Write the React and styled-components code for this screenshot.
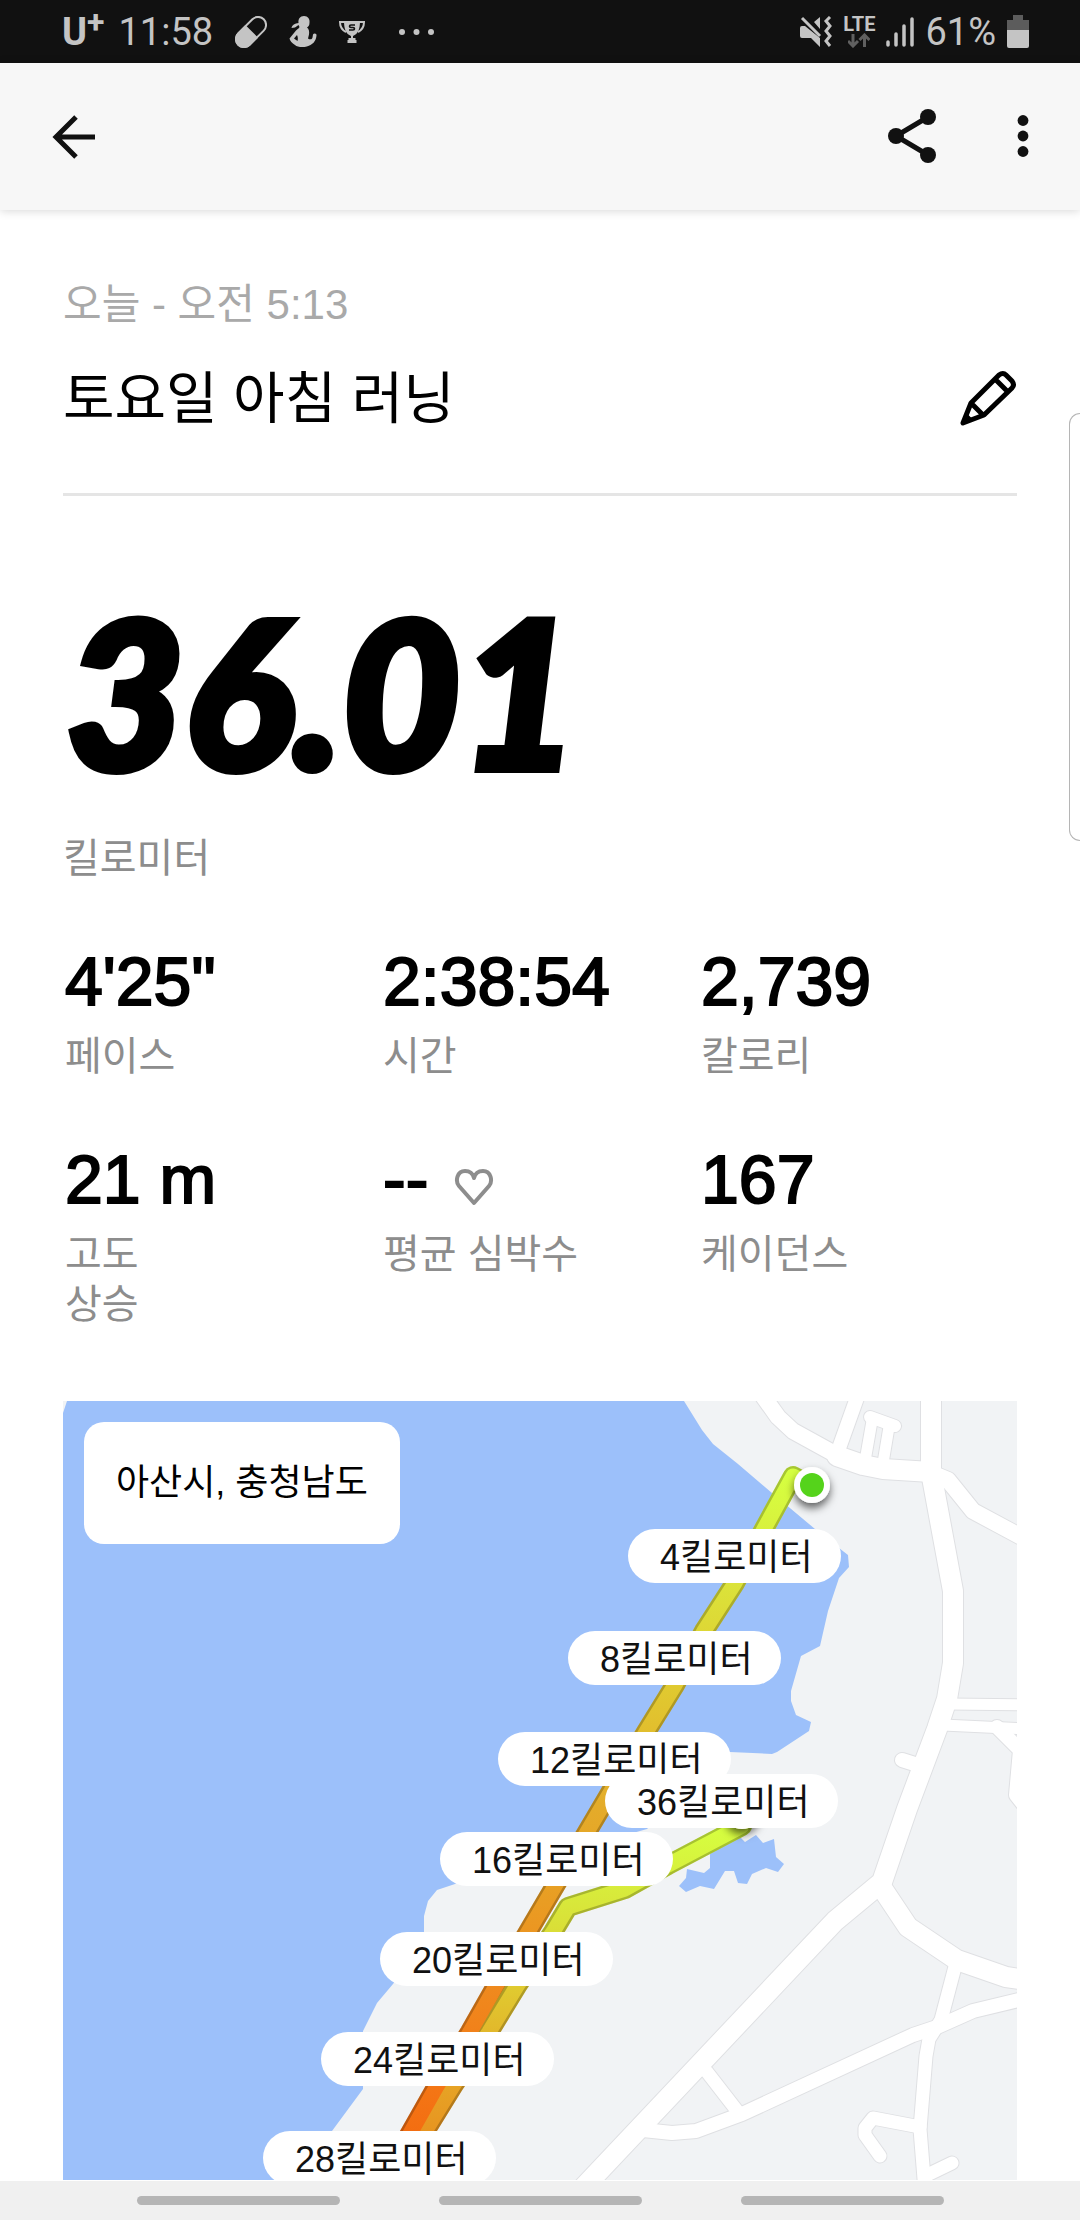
import React from "react";
import styled, { createGlobalStyle } from "styled-components";

const GlobalStyle = createGlobalStyle`
  * {
    box-sizing: border-box;
  }
  body {
    margin: 0;
    background: #fff;
    color: #000;
    font-family: "Liberation Sans", "Noto Sans CJK KR", sans-serif;
  }
`;

const Screen = styled.div`
  position: relative;
  display: flex;
  flex-direction: column;
  height: 100vh;
  overflow: hidden;
`;

const StatusBar = styled.div`
  display: flex;
  flex: none;
  align-items: center;
  justify-content: space-between;
  height: 63px;
  padding: 0 51px 0 62px;
  background: #111;
  color: #c4c4c4;
  font-family: Roboto, sans-serif;
  font-size: 38px;
  line-height: 48px;
`;

const StatusGroup = styled.div`
  display: flex;
  align-items: center;
  gap: ${(props) => props.$gap}px;
  svg {
    display: block;
  }
`;

const Overflow = styled.span`
  padding-left: 12px;
`;

const Carrier = styled.span`
  display: flex;
  font-weight: bold;
  line-height: 44px;
  sup {
    font-size: 32px;
    line-height: 24px;
    vertical-align: top;
  }
`;

const Network = styled.span`
  display: flex;
  flex-direction: column;
  align-items: center;
  font-size: 20px;
  font-weight: bold;
  line-height: 18px;
`;

const TopBar = styled.header`
  display: flex;
  flex: none;
  align-items: center;
  justify-content: space-between;
  height: 147px;
  padding: 0 22px 2px 43px;
  background: #f7f7f7;
  box-shadow: 0 1px 9px rgba(0, 0, 0, 0.16);
  z-index: 1;
`;

const Actions = styled.div`
  display: flex;
  align-items: center;
  gap: 52px;
`;

const IconButton = styled.button`
  display: flex;
  align-items: center;
  justify-content: center;
  padding: 0;
  border: 0;
  background: none;
  color: #111;
`;

const Content = styled.main`
  flex: 1;
  min-height: 0;
  padding: 70px 63px 0;
  overflow: hidden;
`;

const RunDate = styled.p`
  margin: 0;
  color: #a9a9a9;
  font-size: 42px;
  line-height: 50px;
`;

const TitleRow = styled.div`
  display: flex;
  align-items: center;
  justify-content: space-between;
  height: 166px;
  padding-bottom: 26px;
  border-bottom: 3px solid #e5e5e5;
`;

const Title = styled.h1`
  margin: 0;
  font-size: 56px;
  font-weight: normal;
  line-height: 72px;
`;

const Distance = styled.div`
  margin-top: 71px;
  padding-left: 3px;
  font-family: Lato, sans-serif;
  font-size: 204px;
  font-style: italic;
  font-weight: 900;
  line-height: 246px;
  -webkit-text-stroke: 8px currentColor;
`;

const Caption = styled.div`
  color: #8d8d8d;
  font-size: 40px;
  line-height: 50px;
`;

const Unit = styled(Caption)`
  margin-top: 20px;
`;

const Stats = styled.div`
  display: grid;
  grid-template-columns: repeat(3, 1fr);
  row-gap: 24px;
  margin-top: 58px;
`;

const Stat = styled.div`
  min-height: 174px;
  padding-left: 2px;
`;

const StatValue = styled.div`
  display: flex;
  align-items: center;
  gap: 26px;
  height: 80px;
  margin-bottom: 10px;
  font-size: 68px;
  line-height: 80px;
  -webkit-text-stroke: 2px currentColor;
`;

const StatLabel = styled(Caption)`
  white-space: pre-line;
`;

const Map = styled.section`
  position: relative;
  margin-top: 72px;
  aspect-ratio: 954 / 779;
  overflow: hidden;
  background: #f1f3f5;
  > svg {
    display: block;
    width: 100%;
  }
`;

const Place = styled.div`
  position: absolute;
  top: 21px;
  left: 21px;
  padding: 37px 32px;
  border-radius: 20px;
  background: #fff;
  font-size: 36px;
  line-height: 48px;
`;

const Pin = styled.span`
  position: absolute;
  height: 54px;
  padding: 0 28px 0 32px;
  border-radius: 27px;
  background: #fff;
  color: #111;
  font-size: 36px;
  line-height: 58px;
  white-space: nowrap;
`;

const EdgePanel = styled.div`
  position: absolute;
  top: 413px;
  right: 0;
  width: 11px;
  height: 428px;
  border: 1px solid #b5b5b5;
  border-right: 0;
  border-radius: 16px 0 0 16px;
  background: #fff;
`;

const NavBar = styled.nav`
  display: flex;
  flex: none;
  justify-content: center;
  gap: 99px;
  height: 39px;
  padding-top: 15px;
  background: #f0f0f0;
`;

const NavHandle = styled.button`
  width: 203px;
  height: 9px;
  padding: 0;
  border: 0;
  border-radius: 5px;
  background: #b5b5b5;
`;

const PillIcon = () => (
  <svg width="32" height="32" viewBox="0 0 32 32">
    <g transform="rotate(45 16 16)">
      <rect x="8" y="-2" width="16" height="36" rx="8" fill="none" stroke="currentColor" strokeWidth="2" />
      <path d="M7 15h18v11a9 9 0 0 1-18 0z" fill="currentColor" />
    </g>
  </svg>
);

const AthleteIcon = () => (
  <svg width="28" height="32" viewBox="0 0 28 32" fill="currentColor">
    <path d="M15 0c4 0 6 3 5.500 6.500 0 3-1 4-2.500 5 2 1.500 2.500 4 2 7l-1 4c2 1.500 4 1 4.500-1l.5-3c1-2 4-1 3.500 1-.5 5-3 8-6 9.500C18 31.500 9 32 6 29 3 27 1 25 .5 22.500L7 14.500c1.500-1.500 3-2 3.500-3.500l-1-2L6 11.500 2.500 12C3 9 6 7.500 9.500 7 9 3 11 0 15 0z" />
    <path d="M8 19c1 2 1 4 .5 6L5 22.500z" fill="#111" />
  </svg>
);

const TrophyIcon = () => (
  <svg width="26" height="22" viewBox="0 0 26 22">
    <path d="M5 0h16c0 8-2 13-7 15v2h2.500v2h1v3h-9v-3h1v-2H12v-2C7 13 5 8 5 0z" fill="currentColor" />
    <path d="M6 1H1c0 5 2 8 6 10M20 1h5c0 5-2 8-6 10" fill="none" stroke="currentColor" strokeWidth="2" />
    <path d="M16 4h-4c-2 0-2 2.500 0 2.500h2c2 0 2 2.500 0 2.500h-4" fill="none" stroke="#111" strokeWidth="1.600" />
  </svg>
);

const DotsIcon = () => (
  <svg width="35" height="6" viewBox="0 0 35 6" fill="currentColor">
    <circle cx="3" cy="3" r="3" />
    <circle cx="17.500" cy="3" r="3" />
    <circle cx="32" cy="3" r="3" />
  </svg>
);

const MuteIcon = () => (
  <svg width="32" height="32" viewBox="0 0 32 32">
    <path d="M0 12q0-2 2-2h3l15 12v9L11 22H2q-2 0-2-2zM14 6l6-5v12z" fill="currentColor" />
    <path d="M2 2l18 18" stroke="currentColor" strokeWidth="3" />
    <path d="M30 1l-4 4 4 5-4 5 4 5-4 5 4 5" fill="none" stroke="currentColor" strokeWidth="3" />
  </svg>
);

const DataIcon = () => (
  <svg width="22" height="15" viewBox="0 0 22 15" fill="none" stroke="#606060" strokeWidth="3">
    <path d="M5 1v11M0 8l5 5 5-5M16.500 14V3M11.500 7l5-5 5 5" />
  </svg>
);

const SignalIcon = () => (
  <svg width="28" height="32" viewBox="0 0 28 32" stroke="currentColor" strokeWidth="3.500" strokeLinecap="round">
    <path d="M2 26v3M10 18v11M18 10v19M26 3v26" />
  </svg>
);

const BatteryIcon = () => (
  <svg width="22" height="33" viewBox="0 0 22 33">
    <path d="M6 0h10v5h6v10H0V5h6z" fill="#5c5c5c" />
    <path d="M0 15h22v16q0 2-2 2H2q-2 0-2-2z" fill="currentColor" />
  </svg>
);

const BackIcon = () => (
  <svg width="62" height="62" viewBox="0 0 62 62" fill="none" stroke="currentColor" strokeWidth="5">
    <path d="M33 12L13 32l20 20M13 32h39" />
  </svg>
);

const ShareIcon = () => (
  <svg width="48" height="54" viewBox="0 0 48 54" fill="currentColor">
    <path d="M40 8L8 27l32 19" fill="none" stroke="currentColor" strokeWidth="5" />
    <circle cx="40" cy="8" r="8" />
    <circle cx="8" cy="27" r="8" />
    <circle cx="40" cy="46" r="8" />
  </svg>
);

const MoreIcon = () => (
  <svg width="70" height="44" viewBox="0 0 70 44" fill="currentColor">
    <circle cx="35" cy="6.500" r="5.400" />
    <circle cx="35" cy="22" r="5.400" />
    <circle cx="35" cy="37.500" r="5.400" />
  </svg>
);

const PencilIcon = () => (
  <svg width="58" height="58" viewBox="0 0 58 58" fill="none" stroke="#000" strokeWidth="5" strokeLinejoin="round">
    <path d="M4 53l8-20 28-28q4-3 7 0l6 6q3 4 0 7L25 45zM12 33l12 12M36 9l13 13" />
    <path d="M4 53l3-9 6 6z" fill="#000" strokeWidth="2" />
  </svg>
);

const HeartIcon = () => (
  <svg width="40" height="54" viewBox="0 -16 40 54" fill="none" stroke="#8d8d8d" strokeWidth="4" strokeLinejoin="round">
    <path d="M20 35L5 18C1 13 3 3 11 3c5 0 8 3 9 7 1-4 4-7 9-7 8 0 10 10 6 15z" />
  </svg>
);

const roads = [
  { w: 20, d: "M868-9V71L890 190V262L884 298 874 328 844 408 819 481 772 520 520 787" },
  { w: 20, d: "M817 484L845 526 894 559 943 576 964 579" },
  { w: 13, d: "M893 562L878 619 866 638 863 655 857 728 862 790" },
  { w: 14, d: "M964 597L910 610 874 626 850 634 679 713 633 730 609 732 580 729" },
  { w: 13, d: "M644 671L675 711" },
  { w: 13, d: "M857 726L810 717 802 727V734L817 755" },
  { w: 13, d: "M862 775L889 762" },
  { w: 16, d: "M700-5L715 16 730 30 770 52" },
  { w: 20, d: "M774 55L800 64 820 68 868 71" },
  { w: 14, d: "M795-6L775 50" },
  { w: 12, d: "M807 16L832 25" },
  { w: 11, d: "M809 20L802 60M826 26L820 62" },
  { w: 16, d: "M868 72L885 79 910 110 964 139" },
  { w: 11, d: "M886 303L964 304M880 324L964 328" },
  { w: 14, d: "M934 326L957 349 953 394 964 408" },
  { w: 14, d: "M839 359L858 365" },
];

const outbound =
  "M749 85L730 75 701 128 672 182 641 230 612 284 583 331 524 431 492 485 465 531 433 585 407 631 374 685 340 745";
const inbound = "M679 425L605 464 562 488 505 506 490 531 454 585 426 631 390 685 353 745";

const outboundStops = [
  [75, "#d6ff40"],
  [182, "#dbe33a"],
  [284, "#e0ca30"],
  [408, "#e4ab2a"],
  [485, "#e8a024"],
  [585, "#ef8a1e"],
  [685, "#f47615"],
  [745, "#f36b10"],
];

const inboundStops = [
  [425, "#d6ff40"],
  [506, "#d8e63a"],
  [585, "#e0cb30"],
  [631, "#e2b82b"],
  [685, "#e6a325"],
  [745, "#e8901f"],
];

const RouteGradient = ({ id, stops }) => {
  const from = stops[0][0];
  const to = stops[stops.length - 1][0];
  return (
    <linearGradient id={id} gradientUnits="userSpaceOnUse" x1="0" x2="0" y1={from} y2={to}>
      {stops.map(([y, color]) => (
        <stop key={y} offset={(y - from) / (to - from)} stopColor={color} />
      ))}
    </linearGradient>
  );
};

const MapDrawing = () => (
  <svg viewBox="0 0 954 779" aria-hidden="true">
    <defs>
      <RouteGradient id="outbound" stops={outboundStops} />
      <RouteGradient id="inbound" stops={inboundStops} />
      <filter id="shadow" x="-50%" y="-50%" width="200%" height="200%">
        <feDropShadow dx="0" dy="5" stdDeviation="4" floodOpacity="0.6" />
      </filter>
    </defs>
    <path
      fill="#9cc0fa"
      d="M4 0H621L639 29 650 43 675 63 709 92 752 128 776 147 785 154 786 166 776 177 770 195 765 210 757 245 738 255 728 290V300L733 314 748 321 746 330 714 351 709 353 667 351 584 428 392 483 374 489 365 500 361 515V540L330 583 314 602 300 630V688L269 730 240 779H0V12z"
    />
    <path
      fill="#9cc0fa"
      d="M616 485L623 477 624 468 641 472 647 467V453L664 442 675 434 682 441 693 434 700 442 711 438 713 456 721 463 715 471 703 467 689 473 684 483 675 482 671 470H662L651 488 637 485 623 491z"
    />
    <g fill="none" strokeLinecap="round" strokeLinejoin="round">
      {roads.map((road) => (
        <path key={road.d} d={road.d} stroke="#dfe0e3" strokeWidth={road.w + 2} />
      ))}
      {roads.map((road) => (
        <path key={road.d} d={road.d} stroke="#fff" strokeWidth={road.w} />
      ))}
      <path d={outbound} stroke="url(#outbound)" strokeWidth="20" />
      <path d={outbound} stroke="#000" strokeOpacity="0.22" strokeWidth="20" />
      <path d={inbound} stroke="url(#inbound)" strokeWidth="20" />
      <path d={inbound} stroke="#000" strokeOpacity="0.22" strokeWidth="20" />
      <path d={inbound} stroke="url(#inbound)" strokeWidth="15" />
      <path d={outbound} stroke="url(#outbound)" strokeWidth="15" />
    </g>
    <circle cx="679" cy="410" r="18" fill="#fff" filter="url(#shadow)" />
    <circle cx="749" cy="84" r="18" fill="#fff" filter="url(#shadow)" />
    <circle cx="749" cy="84" r="12" fill="#55d31b" />
  </svg>
);

// left / top are in map units, the map is 954 x 779
const pins = [
  { km: 4, left: 565, top: 128 },
  { km: 8, left: 505, top: 230 },
  { km: 12, left: 435, top: 331 },
  { km: 36, left: 542, top: 373 },
  { km: 16, left: 377, top: 431 },
  { km: 20, left: 317, top: 531 },
  { km: 24, left: 258, top: 631 },
  { km: 28, left: 200, top: 730 },
];

const stats = [
  { value: "4'25\"", label: "페이스" },
  { value: "2:38:54", label: "시간" },
  { value: "2,739", label: "칼로리" },
  { value: "21 m", label: "고도\n상승" },
  { value: "--", label: "평균 심박수", icon: <HeartIcon /> },
  { value: "167", label: "케이던스" },
];

const App = () => {
  return (
    <Screen>
      <GlobalStyle />
      <StatusBar>
        <StatusGroup $gap={22}>
          <StatusGroup $gap={14}>
            <Carrier>
              U<sup>+</sup>
            </Carrier>
            <span>11:58</span>
          </StatusGroup>
          <PillIcon />
          <AthleteIcon />
          <TrophyIcon />
          <Overflow>
            <DotsIcon />
          </Overflow>
        </StatusGroup>
        <StatusGroup $gap={11}>
          <MuteIcon />
          <Network>
            LTE
            <DataIcon />
          </Network>
          <SignalIcon />
          <span>61%</span>
          <BatteryIcon />
        </StatusGroup>
      </StatusBar>
      <TopBar>
        <IconButton aria-label="뒤로">
          <BackIcon />
        </IconButton>
        <Actions>
          <IconButton aria-label="공유">
            <ShareIcon />
          </IconButton>
          <IconButton aria-label="더보기">
            <MoreIcon />
          </IconButton>
        </Actions>
      </TopBar>
      <Content>
        <RunDate>오늘 - 오전 5:13</RunDate>
        <TitleRow>
          <Title>토요일 아침 러닝</Title>
          <IconButton aria-label="제목 수정">
            <PencilIcon />
          </IconButton>
        </TitleRow>
        <Distance>36.01</Distance>
        <Unit>킬로미터</Unit>
        <Stats>
          {stats.map((stat) => (
            <Stat key={stat.label}>
              <StatValue>
                {stat.value}
                {stat.icon}
              </StatValue>
              <StatLabel>{stat.label}</StatLabel>
            </Stat>
          ))}
        </Stats>
        <Map>
          <MapDrawing />
          {pins.map((pin) => (
            <Pin
              key={pin.km}
              style={{ left: `${(pin.left / 954) * 100}%`, top: `${(pin.top / 779) * 100}%` }}
            >
              {pin.km}킬로미터
            </Pin>
          ))}
          <Place>아산시, 충청남도</Place>
        </Map>
      </Content>
      <NavBar>
        <NavHandle aria-label="최근 앱" />
        <NavHandle aria-label="홈" />
        <NavHandle aria-label="이전" />
      </NavBar>
      <EdgePanel />
    </Screen>
  );
};

export default App;
